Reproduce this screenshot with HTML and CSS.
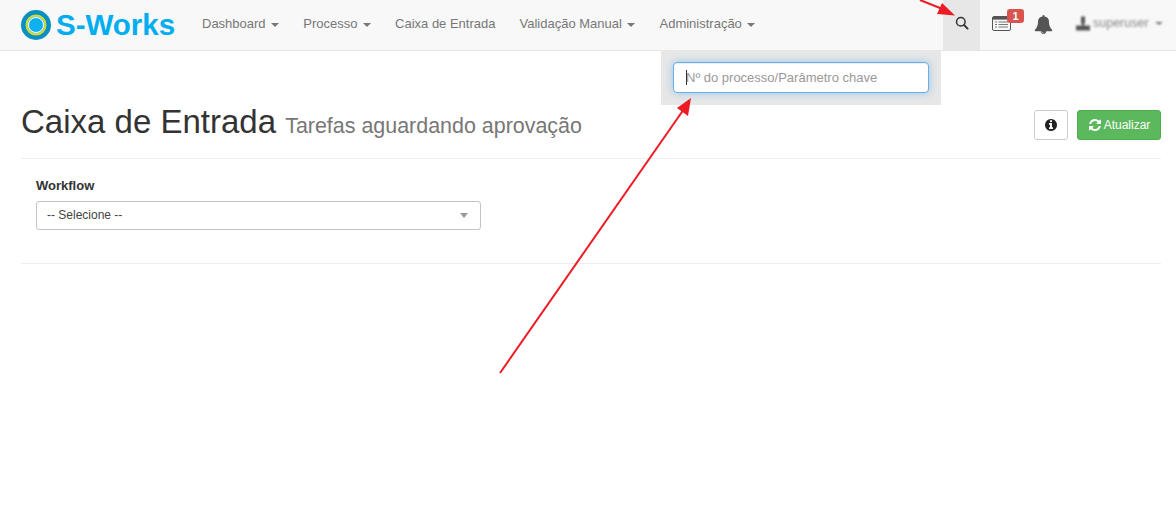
FILE: index.html
```html
<!DOCTYPE html>
<html lang="pt-BR">
<head>
<meta charset="UTF-8">
<meta name="viewport" content="width=device-width, initial-scale=1.0">
<title>S-Works</title>
<link rel="stylesheet" href="styles.css">
</head>
<body>
<div class="top-bar">
  <a class="brand" href="#">
    <svg class="brand-logo" viewBox="0 0 30 30">
      <circle cx="15" cy="15" r="12.5" fill="#6cc5ea" stroke="#0a8fc4" stroke-width="5"/>
      <circle cx="15" cy="15" r="9.5" fill="none" stroke="#d4dc2a" stroke-width="2"/>
      <circle cx="15" cy="15" r="7.5" fill="#0fb0ee" stroke="#fff" stroke-width="1"/>
    </svg>
    <span>S-Works</span>
  </a>
  <ul class="nav-menu">
    <li>Dashboard <i class="caret"></i></li>
    <li>Processo <i class="caret"></i></li>
    <li>Caixa de Entrada</li>
    <li>Validação Manual <i class="caret"></i></li>
    <li>Administração <i class="caret"></i></li>
  </ul>
  <div class="nav-right">
    <div class="nav-icon search-tab">
      <svg class="icon-search" viewBox="0 0 14 14">
        <circle cx="5.8" cy="5.8" r="4.3" fill="none" stroke="#333" stroke-width="1.5"/>
        <path d="M9 9l3.6 3.6" stroke="#333" stroke-width="1.9" stroke-linecap="round"/>
      </svg>
    </div>
    <div class="nav-icon tasks">
      <svg class="icon-list" viewBox="0 0 19 15">
        <rect x="0.5" y="0.5" width="18" height="14" rx="1.5" fill="#f8f8f8" stroke="#555"/>
        <rect x="1" y="1" width="17" height="2.6" fill="#555"/>
        <path d="M3 6h2M3 8.5h2M3 11h2M6.500 6h9.500M6.500 8.500h9.500M6.500 11h9.500" stroke="#777" stroke-width="1.200"/>
      </svg>
      <span class="badge">1</span>
    </div>
    <div class="nav-icon bell">
      <svg class="icon-bell" viewBox="0 0 1792 1792"><path fill="#555" d="M912 1696q0-16-16-16-59 0-101.500-42.500t-42.500-101.500q0-16-16-16t-16 16q0 73 51.500 124.500t124.500 51.500q16 0 16-16zm816-288q0 52-38 90t-90 38h-448q0 106-75 181t-181 75-181-75-75-181h-448q-52 0-90-38t-38-90q50-42 91-88t85-119.500 74.500-158.500 50-206 19.500-260q0-152 117-282.500t307-158.500q-8-19-8-39 0-40 28-68t68-28 68 28 28 68q0 20-8 39 190 28 307 158.500t117 282.500q0 139 19.500 260t50 206 74.500 158.500 85 119.500 91 88z"/></svg>
    </div>
    <div class="user-menu">
      <svg class="icon-user" viewBox="0 0 14 14"><path fill="#555" d="M5 0h4v7H8v2h6v5H0V9h6V7H5z"/></svg>
      <span class="user-name">superuser</span>
      <i class="caret"></i>
    </div>
  </div>
</div>

<div class="search-drop">
  <input class="search-input" type="text" placeholder="Nº do processo/Parâmetro chave">
  <span class="text-cursor"></span>
</div>

<div class="container">
  <div class="page-header">
    <h1>Caixa de Entrada <small>Tarefas aguardando aprovação</small></h1>
    <div class="header-actions">
      <button class="btn btn-info-sq">
        <svg class="icon-info" viewBox="0 0 1792 1792"><path fill="#222" d="M1152 1376v-160q0-14-9-23t-23-9h-96v-512q0-14-9-23t-23-9h-320q-14 0-23 9t-9 23v160q0 14 9 23t23 9h96v320h-96q-14 0-23 9t-9 23v160q0 14 9 23t23 9h448q14 0 23-9t9-23zm-128-896v-160q0-14-9-23t-23-9h-192q-14 0-23 9t-9 23v160q0 14 9 23t23 9h192q14 0 23-9t9-23zm640 416q0 209-103 385.500t-279.500 279.500-385.500 103-385.500-103-279.500-279.500-103-385.500 103-385.500 279.500-279.500 385.500-103 385.500 103 279.500 279.500 103 385.500z"/></svg>
      </button>
      <button class="btn btn-success">
        <svg class="icon-refresh" viewBox="0 0 1792 1792"><path fill="#fff" d="M1639 1056q0 5-1 7-64 268-268 434.500t-478 166.500q-146 0-282.500-55t-243.500-157l-129 129q-19 19-45 19t-45-19-19-45v-448q0-26 19-45t45-19h448q26 0 45 19t19 45-19 45l-137 137q71 66 161 102t187 36q134 0 250-65t186-179q11-17 53-117 8-23 30-23h192q13 0 22.500 9.500t9.500 22.500zm25-800v448q0 26-19 45t-45 19h-448q-26 0-45-19t-19-45 19-45l138-138q-148-137-349-137-134 0-250 65t-186 179q-11 17-53 117-8 23-30 23h-199q-13 0-22.500-9.500t-9.500-22.500v-7q65-268 270-434.500t480-166.500q146 0 284 55.500t245 156.500l130-129q19-19 45-19t45 19 19 45z"/></svg>
        Atualizar
      </button>
    </div>
  </div>
  <div class="filter-box">
    <label class="filter-label">Workflow</label>
    <div class="select-box">
      <span>-- Selecione --</span>
      <i class="select-arrow"></i>
    </div>
  </div>
</div>

<svg class="arrows" viewBox="0 0 1176 520">
  <path d="M500 373L684 109" stroke="#ed1c24" stroke-width="2" fill="none"/>
  <polygon points="691,98 688,116 677,108" fill="#ed1c24"/>
  <path d="M920 0L945 10" stroke="#ed1c24" stroke-width="2" fill="none"/>
  <polygon points="955,15.500 937,14 942,3" fill="#ed1c24"/>
</svg>
</body>
</html>
```

FILE: styles.css
```css
html, body {
  margin: 0;
  padding: 0;
  height: 520px;
  overflow: hidden;
}
body {
  position: relative;
  font-family: "Liberation Sans", Arial, sans-serif;
  font-size: 13px;
  color: #333;
  background-color: #fff;
}
.top-bar {
  display: flex;
  align-items: stretch;
  height: 50px;
  background-color: #f8f8f8;
  border-bottom: 1px solid #e7e7e7;
}
.brand {
  display: flex;
  align-items: center;
  gap: 5px;
  width: 190px;
  padding-left: 21px;
  box-sizing: border-box;
  color: #00aeef;
  font-size: 29.500px;
  font-weight: bold;
  text-decoration: none;
}
.brand-logo {
  width: 30px;
  height: 30px;
}
.nav-menu {
  display: flex;
  list-style: none;
  margin: 0;
  padding: 0;
}
.nav-menu li {
  padding: 0 12px;
  line-height: 47px;
  color: #777;
  white-space: nowrap;
}
.caret {
  display: inline-block;
  width: 0;
  height: 0;
  margin-left: 2px;
  vertical-align: middle;
  border-top: 4px solid #777;
  border-left: 4px solid transparent;
  border-right: 4px solid transparent;
}
.nav-right {
  display: flex;
  margin-left: auto;
}
.nav-icon {
  position: relative;
  display: flex;
  align-items: center;
  justify-content: center;
}
.search-tab {
  width: 37px;
  background-color: #e7e7e7;
}
.icon-search {
  width: 14px;
  height: 14px;
  margin-top: -4px;
}
.tasks {
  justify-content: flex-start;
  width: 26px;
  margin-left: 12px;
}
.icon-list {
  width: 19px;
  height: 15px;
  margin-top: -3px;
}
.badge {
  position: absolute;
  top: 9px;
  left: 15px;
  width: 17px;
  height: 14px;
  border-radius: 3px;
  background-color: #d9534f;
  color: #fff;
  font-size: 11px;
  font-weight: bold;
  line-height: 14px;
  text-align: center;
}
.bell {
  width: 18px;
  margin-left: 16px;
}
.icon-bell {
  width: 19px;
  height: 19px;
  margin-top: -2px;
  flex-shrink: 0;
}
.user-menu {
  display: flex;
  align-items: center;
  width: 124px;
  padding-left: 24px;
  box-sizing: border-box;
  margin-top: -4px;
  filter: blur(1.1px);
}
.icon-user {
  width: 14px;
  height: 15px;
  margin-right: 3px;
}
.user-name {
  font-size: 12.500px;
  color: #888;
}
.user-menu .caret {
  margin-left: 6px;
  border-top-width: 3px;
}
.search-drop {
  position: absolute;
  top: 50px;
  left: 661px;
  width: 280px;
  height: 55px;
  padding: 12px;
  box-sizing: border-box;
  background-color: #e7e7e7;
}
.search-input {
  display: block;
  width: 256px;
  height: 31px;
  padding: 0 12px;
  box-sizing: border-box;
  border: 1px solid #66afe9;
  border-radius: 4px;
  outline: none;
  box-shadow: inset 0 1px 1px rgba(0, 0, 0, .075), 0 0 8px rgba(102, 175, 233, .6);
  font-family: inherit;
  font-size: 13px;
  color: #555;
}
.search-input::placeholder {
  color: #999;
  opacity: 1;
}
.text-cursor {
  position: absolute;
  top: 20px;
  left: 25px;
  width: 1px;
  height: 15px;
  background-color: #333;
}
.container {
  margin: 0 15px 0 21px;
}
.page-header {
  display: flex;
  justify-content: space-between;
  align-items: flex-start;
  padding: 51px 0 12px;
  border-bottom: 1px solid #eee;
}
h1 {
  margin: 0;
  font-size: 33px;
  font-weight: 500;
  line-height: 40px;
}
h1 small {
  font-size: 21.450px;
  font-weight: normal;
  color: #777;
}
.header-actions {
  display: flex;
  gap: 9px;
  margin-top: 8px;
}
.btn {
  display: flex;
  align-items: center;
  justify-content: center;
  height: 30px;
  padding: 0;
  box-sizing: border-box;
  border: 1px solid #ccc;
  border-radius: 3px;
  font-family: inherit;
  font-size: 12px;
}
.btn-info-sq {
  width: 34px;
  background-color: #fff;
}
.icon-info {
  width: 14px;
  height: 14px;
}
.btn-success {
  gap: 2px;
  width: 84px;
  background-color: #5cb85c;
  border-color: #4cae4c;
  color: #fff;
}
.icon-refresh {
  width: 14px;
  height: 14px;
}
.filter-box {
  padding: 19px 15px 33px;
  border-bottom: 1px solid #eee;
}
.filter-label {
  display: block;
  margin-bottom: 7px;
  font-weight: bold;
  line-height: 16px;
  color: #333;
}
.select-box {
  display: flex;
  align-items: center;
  justify-content: space-between;
  width: 445px;
  height: 29px;
  padding: 0 12px 1px 10px;
  box-sizing: border-box;
  border: 1px solid #c4c4c4;
  border-radius: 3px;
  font-size: 12px;
  color: #444;
}
.select-arrow {
  width: 0;
  height: 0;
  border-top: 5px solid #999;
  border-left: 4px solid transparent;
  border-right: 4px solid transparent;
}
.arrows {
  position: absolute;
  top: 0;
  left: 0;
  width: 1176px;
  height: 520px;
  pointer-events: none;
}
```
